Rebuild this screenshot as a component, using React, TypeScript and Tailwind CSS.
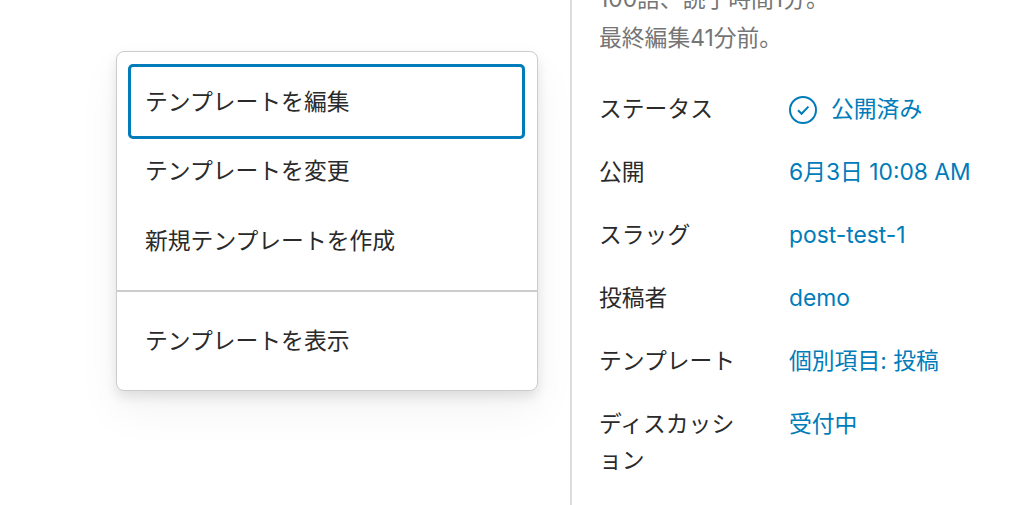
const fontStack = "font-['Inter','Noto_Sans_CJK_JP',sans-serif]";

const rows = [
  { label: "公開", value: "6月3日 10:08 AM" },
  { label: "スラッグ", value: "post-test-1" },
  { label: "投稿者", value: "demo" },
  { label: "テンプレート", value: "個別項目: 投稿" },
];

const MenuItem = ({ label, focused }: { label: string; focused?: boolean }) => (
  <div
    className={`flex h-[75px] items-center rounded-[5px] text-[22.8px] text-[#2a2a2a] ${
      focused ? "mr-[1px] border-[3px] border-[#007cba] px-[14px] pt-[1px]" : "px-[17px]"
    }`}
  >
    {label}
  </div>
);

export default function App() {
  return (
    <div className={`flex h-[505px] w-[1024px] overflow-hidden bg-white ${fontStack}`}>
      <div className="w-[570px] shrink-0 pl-[116px] pt-[51px]">
        <div className="flex h-[340px] w-[422px] flex-col rounded-[8px] border border-[#ccc] bg-white px-[11px] pt-[12px] shadow-[0_6px_12px_rgba(0,0,0,0.1),0_20px_44px_rgba(0,0,0,0.05)]">
          <MenuItem label="テンプレートを編集" focused />
          <div className="-mt-[5px]">
            <MenuItem label="テンプレートを変更" />
          </div>
          <div className="-mt-[5px]">
            <MenuItem label="新規テンプレートを作成" />
          </div>
          <div className="-mx-[11px] mt-[11px] border-t-2 border-[#ccc]" />
          <div className="mt-[12px]">
            <MenuItem label="テンプレートを表示" />
          </div>
        </div>
      </div>

      <div className="flex-1 border-l-2 border-[#ddd] pl-[27px]">
        <div className="-mt-[19px] text-[22.8px] leading-[36px] text-[#757575]">
          <div className="mb-[3px]">100語、読了時間1分。</div>
          <div>最終編集41分前。</div>
        </div>

        <div className="mt-[22px] flex h-[63px] items-center text-[22.8px]">
          <div className="w-[190px] text-[#2a2a2a]">ステータス</div>
          <div className="flex items-center text-[#007cba]">
            <svg viewBox="0 0 28 28" className="mr-[14px] h-[28px] w-[28px]" fill="none" stroke="currentColor" strokeWidth={2}>
              <circle cx="14" cy="14" r="13" />
              <path d="M9 14.2l3.6 3.6L19.4 10.6" />
            </svg>
            公開済み
          </div>
        </div>

        {rows.map((row) => (
          <div key={row.label} className="flex h-[63px] items-center text-[22.8px]">
            <div className="w-[190px] text-[#2a2a2a]">{row.label}</div>
            <div className="text-[#007cba]">{row.value}</div>
          </div>
        ))}

        <div className="mt-[13px] flex text-[22.8px] leading-[36px]">
          <div className="w-[190px] pr-[48px] text-[#2a2a2a]">ディスカッション</div>
          <div className="text-[#007cba]">受付中</div>
        </div>
      </div>
    </div>
  );
}
